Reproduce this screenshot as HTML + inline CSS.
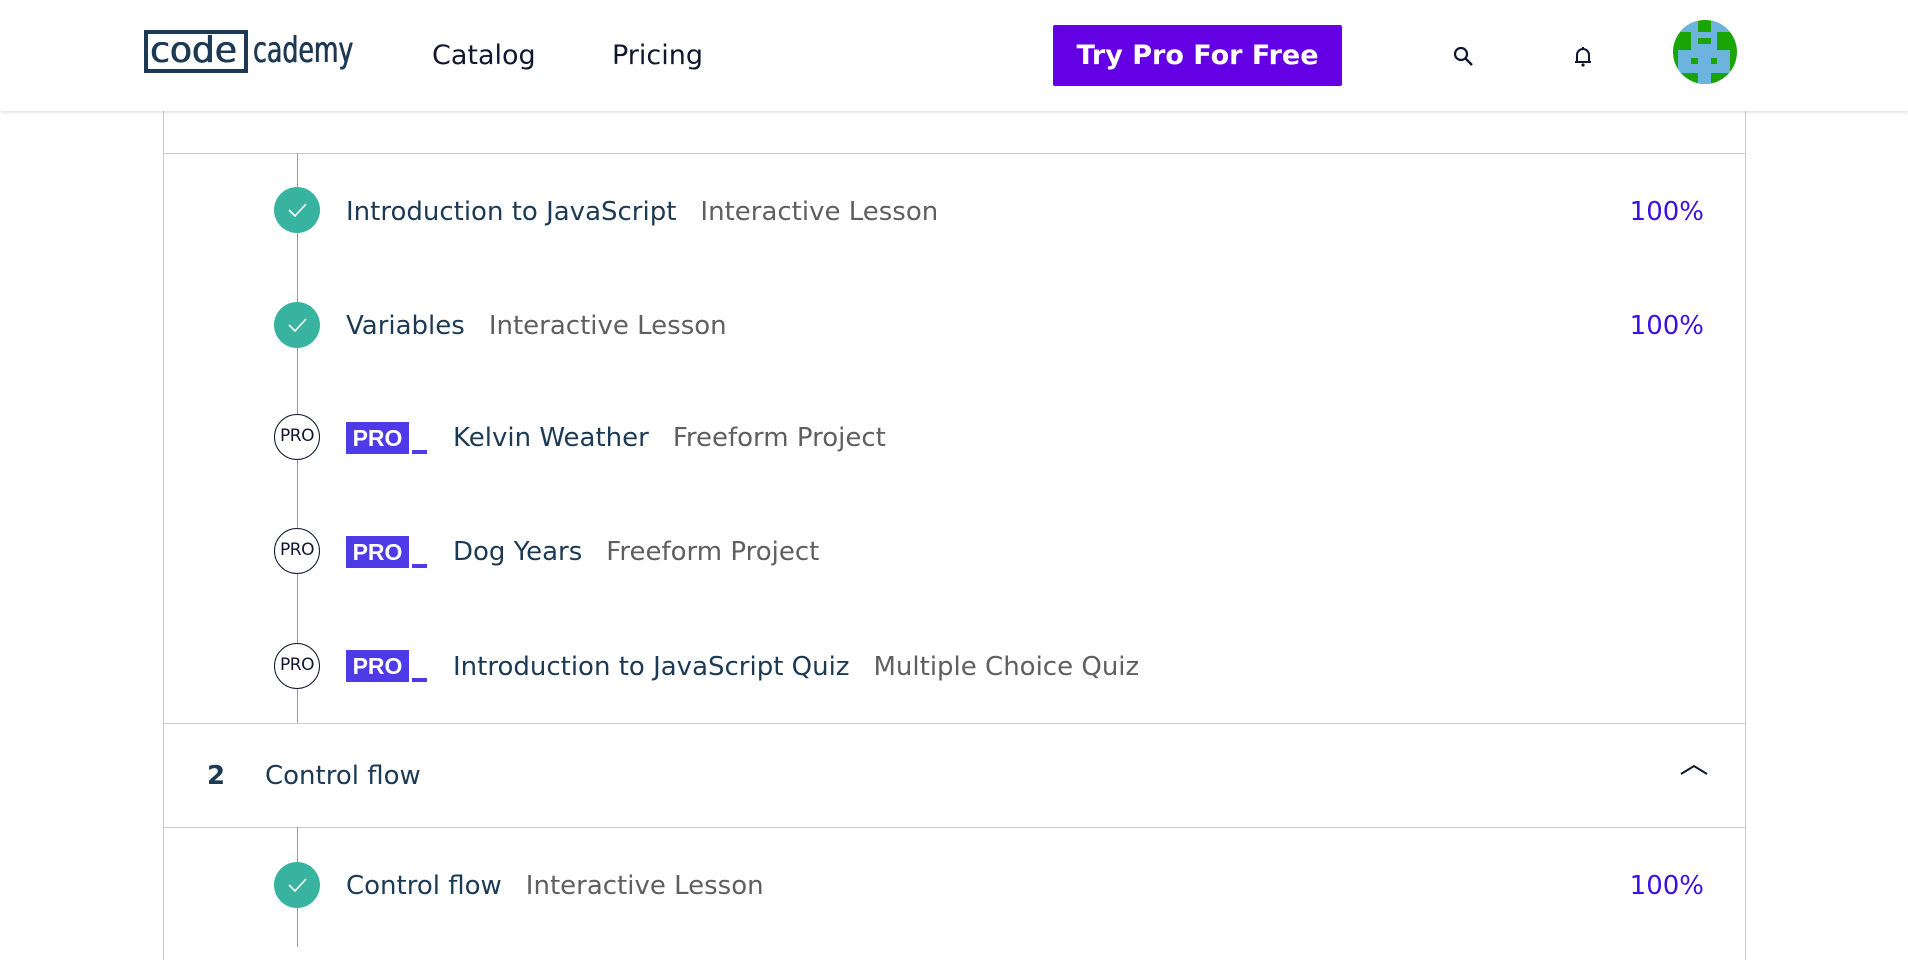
<!DOCTYPE html>
<html><head><meta charset="utf-8"><style>
*{margin:0;padding:0;box-sizing:border-box}
body{width:1908px;height:944px;overflow:hidden;background:#fff;font-family:"DejaVu Sans","Liberation Sans",sans-serif;color:#10162f;position:relative}
.hdr{position:absolute;left:0;top:0;width:1908px;height:111px;background:#fff;box-shadow:0 1px 4px rgba(0,0,0,.15);z-index:5}
.abs{position:absolute;white-space:nowrap}
.box{position:absolute;left:163px;top:0;width:1583px;height:960px;border-left:1px solid #ccc;border-right:1px solid #ccc}
.hl{position:absolute;left:163px;width:1583px;height:1px;background:#ccc}
.vl{position:absolute;left:297px;width:1px;background:#999}
.done{position:absolute;left:274px;width:46px;height:46px;border-radius:50%;background:#37b3a0}
.pro{position:absolute;left:274px;width:46px;height:46px;border-radius:50%;border:1.5px solid #10162f;background:#fff;font-size:17px;line-height:43px;text-align:center;color:#10162f;letter-spacing:-0.5px}
.t{position:absolute;font-size:26px;color:#1d3a55;white-space:nowrap;line-height:30px}
.t span{color:#5f5f5f;margin-left:24px}
.pct{position:absolute;right:204px;font-size:26px;color:#3a10e5;line-height:30px}
.badge{position:absolute;left:346px;width:63px;height:32px;background:#4f3ae8;color:#fff;font-weight:bold;font-size:23px;line-height:32px;text-align:center;font-family:"Liberation Sans",sans-serif}
.us{position:absolute;left:412px;width:15px;height:4px;background:#4f3ae8}
.logo{position:absolute;top:31px;line-height:40px;font-size:36px;color:#1d3a55;transform-origin:left top;text-shadow:0.6px 0 0 #1d3a55,-0.3px 0 0 #1d3a55}
</style></head><body>
<div class="box"></div>
<div class="hl" style="top:153px"></div>
<div class="vl" style="top:153px;height:570px"></div>
<div class="hl" style="top:723px"></div>
<div class="hl" style="top:827px"></div>
<div class="vl" style="top:827px;height:120px"></div>

<div class="done" style="top:187px"><svg width="46" height="46"><path d="M15 23 l6 6 l11-12" stroke="#fff" stroke-width="1.6" fill="none"/></svg></div>
<div class="t" style="left:346px;top:197px">Introduction to JavaScript<span>Interactive Lesson</span></div>
<div class="pct" style="top:197px">100%</div>

<div class="done" style="top:302px"><svg width="46" height="46"><path d="M15 23 l6 6 l11-12" stroke="#fff" stroke-width="1.6" fill="none"/></svg></div>
<div class="t" style="left:346px;top:311px">Variables<span>Interactive Lesson</span></div>
<div class="pct" style="top:311px">100%</div>

<div class="pro" style="top:414px">PRO</div>
<div class="badge" style="top:422px">PRO</div><div class="us" style="top:450px"></div>
<div class="t" style="left:453px;top:423px">Kelvin Weather<span>Freeform Project</span></div>

<div class="pro" style="top:528px">PRO</div>
<div class="badge" style="top:536px">PRO</div><div class="us" style="top:564px"></div>
<div class="t" style="left:453px;top:537px">Dog Years<span>Freeform Project</span></div>

<div class="pro" style="top:643px">PRO</div>
<div class="badge" style="top:650px">PRO</div><div class="us" style="top:678px"></div>
<div class="t" style="left:453px;top:652px">Introduction to JavaScript Quiz<span>Multiple Choice Quiz</span></div>

<div class="t" style="left:207px;top:761px;font-weight:bold;color:#1d3a55">2</div>
<div class="t" style="left:265px;top:761px">Control flow</div>
<svg class="abs" style="left:1679px;top:762px" width="30" height="16"><path d="M2 12 L15 4 L28 12" stroke="#10162f" stroke-width="2" fill="none"/></svg>

<div class="done" style="top:862px"><svg width="46" height="46"><path d="M15 23 l6 6 l11-12" stroke="#fff" stroke-width="1.6" fill="none"/></svg></div>
<div class="t" style="left:346px;top:871px">Control flow<span>Interactive Lesson</span></div>
<div class="pct" style="top:871px">100%</div>

<div class="hdr">
 <div class="abs" style="left:144px;top:30px;width:104px;height:43px;border:4px solid #1d3a55"></div>
 <div class="logo" style="left:150px;transform:scaleX(1.0)">code</div>
 <div class="logo" style="left:253px;transform:scaleX(0.70)">cademy</div>
 <div class="abs" style="left:234px;top:69px;width:13px;height:4px;background:#1d3a55"></div>
 <div class="abs" style="left:432px;top:40px;font-size:27px;color:#10162f">Catalog</div>
 <div class="abs" style="left:612px;top:40px;font-size:27px;color:#10162f">Pricing</div>
 <div class="abs" style="left:1053px;top:25px;width:289px;height:61px;background:#6400e4;border-radius:2px;color:#fff;font-weight:bold;font-size:27px;line-height:61px;text-align:center">Try Pro For Free</div>
 <svg class="abs" style="left:1452px;top:45px" width="24" height="24"><circle cx="9" cy="9" r="6" stroke="#10162f" stroke-width="2.2" fill="none"/><path d="M13.5 13.5 L20 20" stroke="#10162f" stroke-width="2.4"/></svg>
 <svg class="abs" style="left:1572px;top:45px" width="22" height="24"><path d="M5 17 V10 a6 6 0 0 1 12 0 V17 Z M3 17 H19" stroke="#10162f" stroke-width="2" fill="none"/><circle cx="11" cy="20" r="1.6" fill="#10162f"/><path d="M11 2 V4" stroke="#10162f" stroke-width="2"/></svg>
 <svg class="abs" style="left:1672px;top:19px" width="66" height="66"><defs><clipPath id="c"><circle cx="33" cy="33" r="32"/></clipPath></defs><g clip-path="url(#c)"><rect width="66" height="66" fill="#1aa505"/><rect x="0" y="0" width="26" height="13" fill="#6cb4de"/><rect x="39" y="0" width="27" height="13" fill="#6cb4de"/><rect x="19" y="13" width="26" height="19" fill="#6cb4de"/><rect x="26" y="19" width="13" height="6" fill="#1aa505"/><rect x="6" y="31" width="52" height="23" fill="#6cb4de"/><rect x="19" y="39" width="7" height="6" fill="#1aa505"/><rect x="39" y="39" width="6" height="6" fill="#1aa505"/><rect x="26" y="54" width="13" height="12" fill="#6cb4de"/></g></svg>
</div>
</body></html>
